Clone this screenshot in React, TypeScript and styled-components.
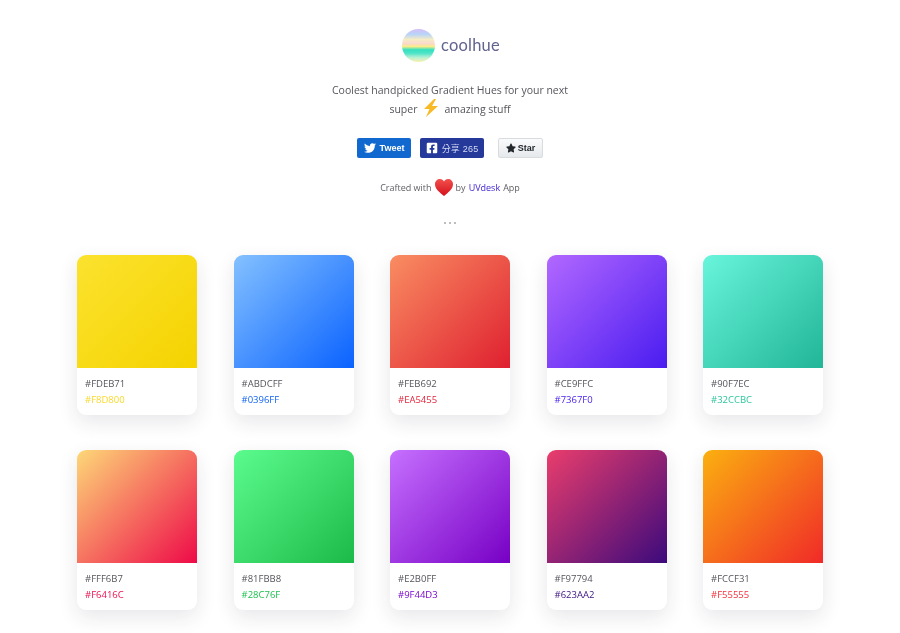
import { FaFacebookSquare, FaStar, FaTwitter } from "react-icons/fa";
import styled, { createGlobalStyle } from "styled-components";

interface IHue {
  from: string;
  to: string;
  start: string;
  end: string;
  label: string;
}

const hues: IHue[] = [
  { from: "#FDEB71", to: "#F8D800", start: "#fbe22e", end: "#f5d300", label: "#f9d92a" },
  { from: "#ABDCFF", to: "#0396FF", start: "#84c1ff", end: "#0a62ff", label: "#1565f0" },
  { from: "#FEB692", to: "#EA5455", start: "#f98d62", end: "#df2030", label: "#e6263c" },
  { from: "#CE9FFC", to: "#7367F0", start: "#b268ff", end: "#4a1cf0", label: "#4a24ea" },
  { from: "#90F7EC", to: "#32CCBC", start: "#68f5dc", end: "#22b596", label: "#2cc79c" },
  { from: "#FFF6B7", to: "#F6416C", start: "#fdd878", end: "#ee0a48", label: "#ee1050" },
  { from: "#81FBB8", to: "#28C76F", start: "#5cfb8e", end: "#1cbb48", label: "#1fc24f" },
  { from: "#E2B0FF", to: "#9F44D3", start: "#c670ff", end: "#7700c4", label: "#7a06cc" },
  { from: "#F97794", to: "#623AA2", start: "#ea3d6c", end: "#3c0a7c", label: "#3b1380" },
  { from: "#FCCF31", to: "#F55555", start: "#fbb010", end: "#f02a28", label: "#f4303c" },
];

const GlobalStyle = createGlobalStyle`
  html, body {
    margin: 0;
    background: #fff;
  }
  body {
    font-family: "Open Sans", "Liberation Sans", sans-serif;
    color: #5a5a60;
  }
`;

const Page = styled.div`
  width: 900px;
  height: 633px;
  overflow: hidden;
  display: flex;
  flex-direction: column;
  align-items: center;
  padding-top: 28px;
  box-sizing: border-box;
  filter: blur(0.35px);
`;

const Brand = styled.header`
  display: flex;
  align-items: center;
  gap: 6px;
  height: 34px;
  margin-left: 2px;
`;

const Logo = styled.div`
  width: 33px;
  height: 33px;
  border-radius: 50%;
  filter: blur(0.6px);
  background: linear-gradient(
    180deg,
    #d4bdf6 0%,
    #b8d4f8 16%,
    #f6ecc4 32%,
    #fbd8cc 44%,
    #f8ec88 53%,
    #32e0c0 63%,
    #52e4c8 74%,
    #b4f0d4 86%,
    #f8f2b0 100%
  );
`;

const BrandName = styled.h1`
  margin: 0;
  font-family: "Lato", sans-serif;
  font-size: 16.5px;
  font-weight: 400;
  letter-spacing: 0.2px;
  color: #62638f;
`;

const Tagline = styled.p`
  margin: 19px 0 0;
  font-size: 10.5px;
  line-height: 18px;
  text-align: center;
  color: #55555c;
`;

const BoltIcon = styled.svg`
  width: 17px;
  height: 18px;
  margin: 0 5px;
  vertical-align: -4px;
`;

const Buttons = styled.div`
  display: flex;
  align-items: center;
  margin-top: 20px;
  height: 20px;
`;

const SocialButton = styled.div<{ $bg: string; $gap?: number }>`
  height: 20px;
  box-sizing: border-box;
  display: flex;
  align-items: center;
  justify-content: center;
  gap: 4px;
  border-radius: 2px;
  background: ${(p) => p.$bg};
  color: #fff;
  font-family: "Liberation Sans", sans-serif;
  font-size: 9px;
  font-weight: 700;
  margin-right: ${(p) => p.$gap ?? 0}px;
`;

const TweetButton = styled(SocialButton)`
  width: 54px;
  svg {
    font-size: 12px;
  }
`;

const ShareButton = styled(SocialButton)`
  width: 64px;
  font-weight: 400;
  letter-spacing: 0.2px;
  color: #d5dbf3;
  font-family: "Liberation Sans", "Noto Sans CJK TC", sans-serif;
  svg {
    font-size: 12px;
    color: #fff;
  }
`;

const StarButton = styled(SocialButton)`
  width: 45px;
  color: #24292e;
  border: 1px solid #d9dcdf;
  background: linear-gradient(180deg, #fafbfc, #e6e9ec);
  gap: 2px;
  svg {
    font-size: 10px;
  }
`;

const Crafted = styled.p`
  margin: 20px 0 0;
  height: 18px;
  display: flex;
  align-items: center;
  font-size: 9px;
  color: #606066;
`;

const HeartIcon = styled.svg`
  width: 18px;
  height: 17px;
  margin: 0 3px;
`;

const AuthorLink = styled.a`
  color: #3b1fd1;
  margin: 0 3px;
`;

const Dots = styled.div`
  margin-top: 17px;
  display: flex;
  gap: 3px;
  height: 20px;
  align-items: center;
`;

const Dot = styled.span`
  width: 2px;
  height: 2px;
  border-radius: 50%;
  background: #a8a8ad;
`;

const Grid = styled.main`
  margin-top: 22px;
  width: 746px;
  display: grid;
  grid-template-columns: repeat(5, 120px);
  justify-content: space-between;
  row-gap: 35px;
`;

const Card = styled.article`
  height: 160px;
  background: #fff;
  border-radius: 9px;
  overflow: hidden;
  box-shadow: 0 7px 20px rgba(40, 40, 60, 0.11);
`;

const Swatch = styled.div<{ $from: string; $to: string }>`
  height: 113px;
  background: linear-gradient(135deg, ${(p) => p.$from} 0%, ${(p) => p.$to} 100%);
`;

const Codes = styled.div`
  padding: 8px 8px 0;
  font-size: 9.5px;
  line-height: 16px;
`;

const CodeFrom = styled.div`
  color: #55555c;
`;

const CodeTo = styled.div<{ $color: string }>`
  color: ${(p) => p.$color};
`;

function App() {
  return (
    <>
      <GlobalStyle />
      <Page>
        <Brand>
          <Logo />
          <BrandName>coolhue</BrandName>
        </Brand>
        <Tagline>
          Coolest handpicked Gradient Hues for your next
          <br />
          super
          <BoltIcon viewBox="0 0 17 18">
            <path d="M12 0 2 10h5.500L4 18 16 7h-6l4-7z" fill="#f7b924" />
          </BoltIcon>
          amazing stuff
        </Tagline>
        <Buttons>
          <TweetButton $bg="#1169cf" $gap={9}>
            <FaTwitter />
            Tweet
          </TweetButton>
          <ShareButton $bg="#24399a" $gap={14}>
            <FaFacebookSquare />
            分享 265
          </ShareButton>
          <StarButton $bg="#eee">
            <FaStar />
            Star
          </StarButton>
        </Buttons>
        <Crafted>
          Crafted with
          <HeartIcon viewBox="0 0 18 17">
            <defs>
              <linearGradient id="heartFill" x1="0" y1="0" x2="0" y2="1">
                <stop offset="0" stopColor="#f2504c" />
                <stop offset="1" stopColor="#d4101c" />
              </linearGradient>
            </defs>
            <path
              d="M9 17C5 13.500 0 10 0 5.200 0 2 2.300 0 5 0c1.800 0 3.200 1 4 2.400C9.800 1 11.200 0 13 0c2.700 0 5 2 5 5.200C18 10 13 13.500 9 17z"
              fill="url(#heartFill)"
            />
          </HeartIcon>
          by
          <AuthorLink>UVdesk</AuthorLink>
          App
        </Crafted>
        <Dots>
          <Dot />
          <Dot />
          <Dot />
        </Dots>
        <Grid>
          {hues.map((hue) => (
            <Card key={hue.from}>
              <Swatch $from={hue.start} $to={hue.end} />
              <Codes>
                <CodeFrom>{hue.from}</CodeFrom>
                <CodeTo $color={hue.label}>{hue.to}</CodeTo>
              </Codes>
            </Card>
          ))}
        </Grid>
      </Page>
    </>
  );
}

export default App;
